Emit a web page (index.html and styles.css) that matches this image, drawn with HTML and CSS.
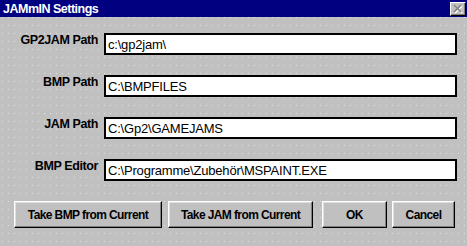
FILE: index.html
```html
<!DOCTYPE html>
<html lang="de">
<head>
    <meta charset="UTF-8">
    <title>JAMmIN Settings</title>
    <link rel="stylesheet" href="styles.css">
</head>
<body>
    <div class="window">
        <div class="titlebar">
            <span class="title">JAMmIN Settings</span>
            <button class="close" type="button" aria-label="Close">
                <svg width="12" height="10" viewBox="0 0 12 10">
                    <path d="M3 2 L10 9 M10 2 L3 9" stroke="#fff" stroke-width="1.6" fill="none"/>
                    <path d="M2 1 L9 8 M9 1 L2 8" stroke="#808080" stroke-width="1.6" fill="none"/>
                </svg>
            </button>
        </div>
        <form class="settings">
            <div class="field">
                <label for="gp2jam">GP2JAM Path</label>
                <input type="text" id="gp2jam" value="c:\gp2jam\">
            </div>
            <div class="field">
                <label for="bmp">BMP Path</label>
                <input type="text" id="bmp" value="C:\BMPFILES">
            </div>
            <div class="field">
                <label for="jam">JAM Path</label>
                <input type="text" id="jam" value="C:\Gp2\GAMEJAMS">
            </div>
            <div class="field">
                <label for="editor">BMP Editor</label>
                <input type="text" id="editor" value="C:\Programme\Zubehör\MSPAINT.EXE">
            </div>
            <div class="actions">
                <button type="button" class="btn btn-bmp">Take BMP from Current</button>
                <button type="button" class="btn btn-jam">Take JAM from Current</button>
                <button type="submit" class="btn btn-ok">OK</button>
                <button type="button" class="btn btn-cancel">Cancel</button>
            </div>
        </form>
    </div>
</body>
</html>
```

FILE: styles.css
```css
/* General Styles */
body {
    margin: 0;
    padding: 0;
    font-family: "Liberation Sans", Arial, sans-serif;
}

.window {
    width: 467px;
    height: 246px;
    background-color: #c0c0c0;
    background-image: conic-gradient(from 90deg at 1px 1px, transparent 50%, #e2e2e2 0 75%, transparent 0);
    background-size: 6px 8px;
    background-position: 2px 9px;
    overflow: hidden;
}

/* Title bar */
.titlebar {
    height: 17px;
    background: #000080;
    display: flex;
    align-items: center;
    justify-content: space-between;
    padding-left: 3px;
}

.title {
    color: #fff;
    font-weight: bold;
    font-size: 12.5px;
    letter-spacing: -0.5px;
}

.close {
    width: 16px;
    height: 14px;
    margin-right: 1px;
    padding: 0;
    display: flex;
    align-items: center;
    justify-content: center;
    background: #c0c0c0;
    border: 1px solid;
    border-color: #fff #000 #000 #fff;
    box-shadow: inset -1px -1px #808080;
}

/* Form */
.settings {
    padding-top: 16px;
}

.field {
    display: grid;
    grid-template-columns: 98px 353px;
    column-gap: 6px;
    align-items: start;
    margin-bottom: 20px;
}

.field label {
    text-align: right;
    font-weight: bold;
    font-size: 12.5px;
    letter-spacing: -0.4px;
    line-height: 15px;
    color: #000;
}

.field input {
    box-sizing: border-box;
    height: 22px;
    width: 353px;
    margin: 0;
    padding: 0 2px;
    border: 2px solid #000;
    background: #fff;
    font-family: "Liberation Sans", Arial, sans-serif;
    font-size: 13px;
    letter-spacing: -0.2px;
    color: #000;
    outline: none;
}

/* Buttons */
.actions {
    display: flex;
    gap: 6px;
    margin-top: 1px;
    padding-left: 14px;
}

.btn {
    height: 27px;
    padding: 0;
    background: #c0c0c0;
    border: 1px solid;
    border-color: #fff #000 #000 #fff;
    box-shadow: inset -1px -1px #808080, inset 1px 1px #dfdfdf;
    font-family: "Liberation Sans", Arial, sans-serif;
    font-weight: bold;
    font-size: 12px;
    letter-spacing: -0.6px;
    color: #000;
}

.btn-bmp { width: 148px; }
.btn-jam { width: 145px; }
.btn-ok { width: 65px; margin-left: 3px; }
.btn-cancel { width: 63px; margin-left: -1px; }
```
